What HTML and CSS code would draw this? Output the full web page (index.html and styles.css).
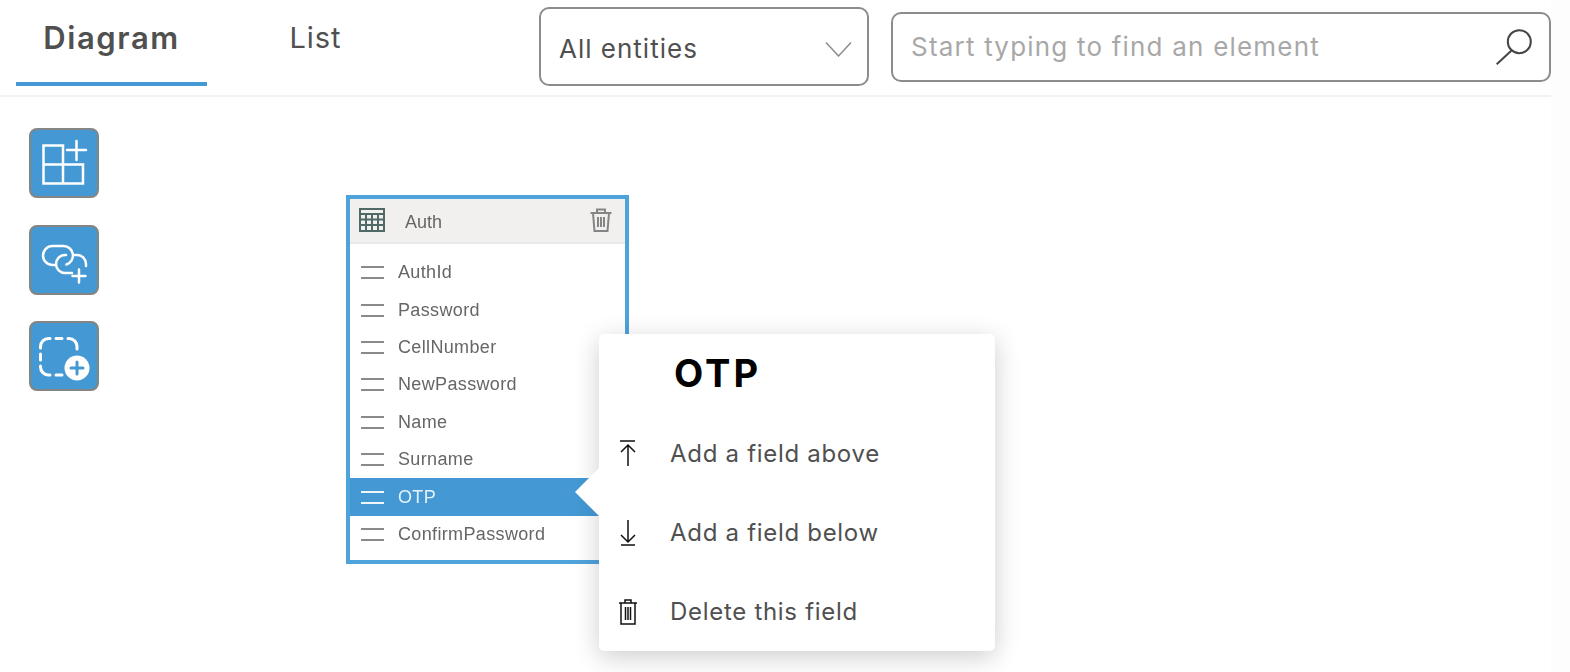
FILE: index.html
```html
<!DOCTYPE html>
<html lang="en">
<head>
<meta charset="utf-8">
<title>Diagram</title>
<link rel="stylesheet" href="styles.css">
</head>
<body>
<div class="page">
  <header class="header">
    <nav class="tabs">
      <div class="tab tab-active">Diagram</div>
      <div class="tab">List</div>
    </nav>
    <div class="select">
      <span>All entities</span>
      <svg class="chevron" width="28" height="16" viewBox="0 0 28 16"><path d="M1 1.500 13.500 15 26 1.500"/></svg>
    </div>
    <div class="search">
      <span>Start typing to find an element</span>
      <svg class="magnifier" width="38" height="38" viewBox="0 0 38 38"><circle cx="24.300" cy="13.700" r="11.500"/><path d="M16.500 22.500 1.700 36.300"/></svg>
    </div>
  </header>
  <main class="canvas">
    <div class="toolbar">
      <button class="tool">
        <svg width="70" height="70" viewBox="0 0 70 70"><path d="M14.500 17.500H34V55.500H14.500ZM14.500 36.500H54V55.500H34M38 22H57M47.500 13V32"/></svg>
      </button>
      <button class="tool">
        <svg width="70" height="70" viewBox="0 0 70 70"><path d="M25 40H23.500a9.500 9.500 0 0 1 0-19H34.500a9.500 9.500 0 0 1 3 18.500M37 30H36a9 9 0 0 0 0 18h7M46 30h2a9 9 0 0 1 9 9v2M50 44.500V57.500M43.500 51H56.500"/></svg>
      </button>
      <button class="tool">
        <svg width="70" height="70" viewBox="0 0 70 70"><path class="dash" d="M11.500 27V25.500a8 8 0 0 1 8-8H21M27 17.500H33M39 17.500H40a8 8 0 0 1 8 8V28M11.500 33V39M11.500 45V46a8 8 0 0 0 8 8H21M27 54H33"/><circle class="disc" cx="48" cy="47" r="12.500"/><path class="plus" d="M48 41V53M42 47H54"/></svg>
      </button>
    </div>

    <section class="entity">
      <div class="entity-head">
        <svg class="table-icon" width="26" height="24" viewBox="0 0 26 24"><rect x="1" y="1" width="24" height="22"/><path d="M1 6H25M1 11.500H25M1 17H25M7 6V23M13 6V23M19 6V23"/></svg>
        <span class="entity-name">Auth</span>
        <svg class="head-trash" width="24" height="26" viewBox="0 0 24 26"><path d="M1.500 6H22.500M8 6V2.500H16V6M4 6 5.500 24H18.500L20 6M9 10V20M12 10V20M15 10V20"/></svg>
      </div>
      <ul class="fields">
        <li class="field"><i class="grip"></i>AuthId</li>
        <li class="field"><i class="grip"></i>Password</li>
        <li class="field"><i class="grip"></i>CellNumber</li>
        <li class="field"><i class="grip"></i>NewPassword</li>
        <li class="field"><i class="grip"></i>Name</li>
        <li class="field"><i class="grip"></i>Surname</li>
        <li class="field field-selected"><i class="grip"></i>OTP</li>
        <li class="field"><i class="grip"></i>ConfirmPassword</li>
      </ul>
    </section>

    <section class="popup">
      <span class="popup-arrow"></span>
      <h2 class="popup-title">OTP</h2>
      <div class="menu-item">
        <svg width="20" height="28" viewBox="0 0 20 28"><path d="M2 1H17M10 5V26M3 12 10 5 17 12"/></svg>
        <span>Add a field above</span>
      </div>
      <div class="menu-item">
        <svg width="20" height="28" viewBox="0 0 20 28"><path d="M3 26H17M10 1V23M3 16 10 23 17 16"/></svg>
        <span>Add a field below</span>
      </div>
      <div class="menu-item">
        <svg width="20" height="28" viewBox="0 0 20 28"><path d="M1 5H19M7 5V2H13V5M3 5V26H17V5M7.500 9V22M10 9V22M12.500 9V22"/></svg>
        <span>Delete this field</span>
      </div>
    </section>
  </main>
</div>
</body>
</html>
```

FILE: styles.css
```css
* { box-sizing: border-box; }

html, body {
  margin: 0;
  height: 672px;
  overflow: hidden;
  background: #fdfdfd;
  font-family: Inter, "Open Sans", sans-serif;
  color: #505050;
}

.page { width: 1551px; height: 672px; background: #fff; }

.header {
  display: flex;
  align-items: center;
  height: 97px;
  padding-bottom: 2px;
  border-bottom: 2px solid #f2f2f2;
}

.tabs {
  display: flex;
  align-self: flex-start;
  gap: 13px;
  width: 539px;
  padding-left: 16px;
}

.tab {
  width: 191px;
  height: 86px;
  padding-top: 20px;
  text-align: center;
  font-size: 29px;
  line-height: 36px;
  letter-spacing: 1px;
  font-weight: 400;
}

.tab-active {
  font-size: 31px;
  letter-spacing: 1.600px;
  font-weight: 600;
  border-bottom: 4px solid #4499d4;
}

.select,
.search {
  display: flex;
  align-items: center;
  justify-content: space-between;
  border: 2px solid #8c8c8c;
  border-radius: 10px;
  font-size: 26px;
  letter-spacing: 1px;
}

.select {
  width: 330px;
  height: 79px;
  padding: 4px 14px 0 18px;
}

.search {
  width: 660px;
  height: 70px;
  margin-left: 22px;
  padding: 0 16px 0 18px;
  letter-spacing: 1.200px;
  color: #a8a8a8;
}

.chevron path { fill: none; stroke: #8c8c8c; stroke-width: 1.500; }
.magnifier { fill: none; stroke: #444; stroke-width: 2; }

.canvas { position: relative; height: 575px; }

.toolbar {
  display: flex;
  flex-direction: column;
  gap: 26.500px;
  width: 70px;
  margin-left: 29px;
  padding-top: 31px;
}

.tool {
  display: block;
  width: 70px;
  height: 70px;
  padding: 0;
  margin: 0;
  background: #4499d4;
  border: 2px solid #858585;
  border-radius: 8px;
  position: relative;
}

.tool svg {
  position: absolute;
  left: -2px;
  top: -2px;
  fill: none;
  stroke: #fff;
  stroke-width: 2.500;
  stroke-linecap: round;
}

.tool .dash { stroke-width: 3; }
.tool .disc { fill: #fff; stroke: none; }
.tool .plus { stroke: #4499d4; stroke-width: 3; }

.entity {
  position: absolute;
  left: 346px;
  top: 98px;
  width: 283px;
  height: 369px;
  background: #fff;
  border: 4px solid #4fa3db;
  filter: blur(.7px);
  font-family: "Liberation Sans", Arial, sans-serif;
  color: #666;
}

.entity-head {
  display: flex;
  align-items: center;
  height: 45px;
  padding: 0 12px 2px 9px;
  background: #f1f0ee;
  border-bottom: 2px solid #e8e8e6;
}

.entity-name {
  flex: 1;
  margin: 5px 0 0 20px;
  font-size: 18px;
}

.table-icon { fill: none; stroke: #4f6a66; stroke-width: 2; }
.head-trash { fill: none; stroke: #858585; stroke-width: 2; }

.fields {
  list-style: none;
  margin: 0;
  padding: 10px 0 0;
}

.field {
  display: flex;
  align-items: center;
  height: 37.400px;
  padding-left: 11px;
  font-size: 18px;
  letter-spacing: .35px;
}

.grip {
  display: block;
  width: 23px;
  height: 13px;
  margin-right: 14px;
  border-top: 2px solid #8a8a8a;
  border-bottom: 2px solid #8a8a8a;
}

.field-selected {
  background: #4499d4;
  color: #e6f2fa;
}

.field-selected .grip { border-color: #f0f7fc; }

.popup {
  position: absolute;
  left: 599px;
  top: 237px;
  width: 396px;
  height: 317px;
  padding: 0 0 0 19px;
  background: #fff;
  border-radius: 5px;
  box-shadow: 0 6px 26px rgba(0, 0, 0, .2);
}

.popup-arrow {
  position: absolute;
  left: -24px;
  top: 134px;
  width: 0;
  height: 0;
  border-style: solid;
  border-width: 24px 24px 24px 0;
  border-color: transparent #fff transparent transparent;
}

.popup-title {
  margin: 0 0 0 56px;
  padding-top: 17px;
  height: 80px;
  font-size: 38px;
  line-height: 44px;
  font-weight: 700;
  letter-spacing: 3px;
  color: #000;
}

.menu-item {
  display: flex;
  align-items: center;
  gap: 32px;
  height: 79px;
  font-size: 24px;
  letter-spacing: .7px;
}

.menu-item svg { fill: none; stroke: #111; stroke-width: 1.500; flex: none; }
```
